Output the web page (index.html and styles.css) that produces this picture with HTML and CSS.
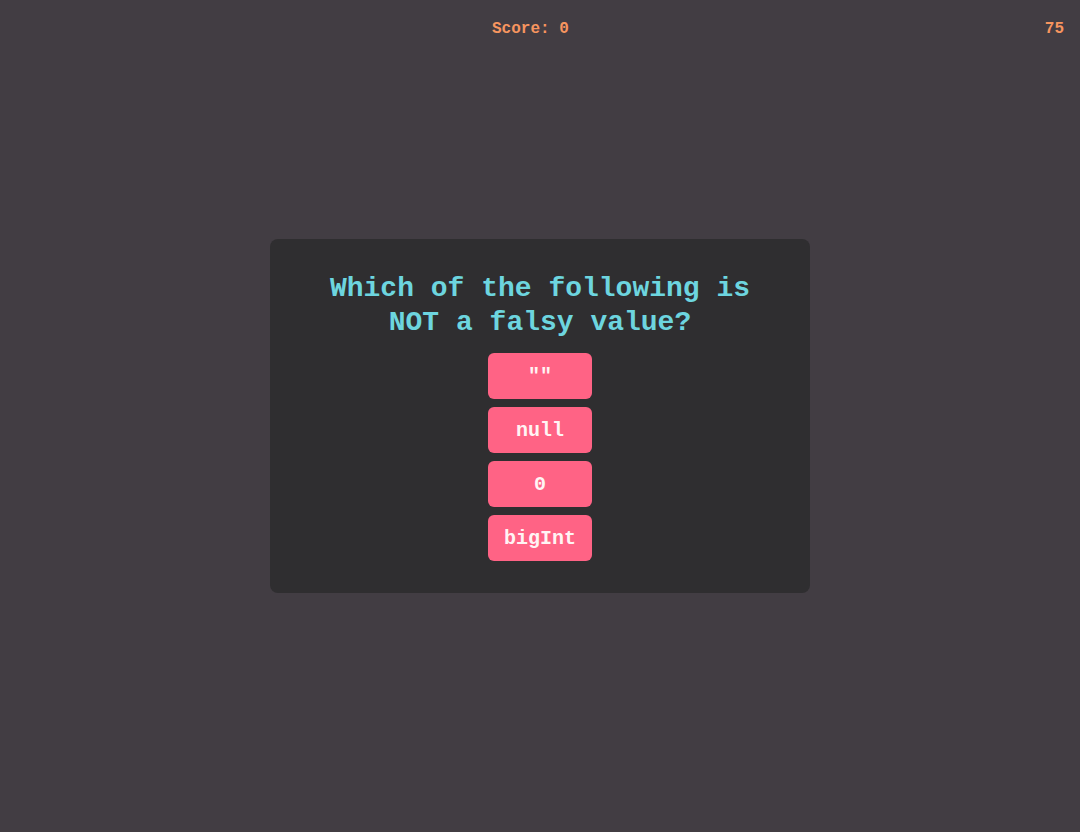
FILE: index.html
```html
<!DOCTYPE html>
<html lang="en">
<head>
<meta charset="utf-8">
<title>Quiz</title>
<link rel="stylesheet" href="styles.css">
</head>
<body>
<div class="page">
  <header class="top-bar">
    <span class="top-spacer"></span>
    <span class="score">Score: 0</span>
    <span class="timer">75</span>
  </header>
  <main class="stage">
    <section class="card">
      <h1 class="question">Which of the following is NOT a falsy value?</h1>
      <div class="answers">
        <button class="answer">""</button>
        <button class="answer">null</button>
        <button class="answer">0</button>
        <button class="answer">bigInt</button>
      </div>
    </section>
  </main>
  <div class="bottom-spacer"></div>
</div>
</body>
</html>
```
FILE: styles.css
```css
html, body {
  margin: 0;
  padding: 0;
}
body {
  background: #423d43;
  font-family: "Liberation Mono", "Courier New", monospace;
  font-weight: bold;
}
.page {
  height: 100vh;
  display: grid;
  grid-template-rows: 56px 1fr 56px;
}
.top-bar {
  display: flex;
  justify-content: space-between;
  align-items: flex-start;
  padding: 20px 16px 0;
  font-size: 16px;
  line-height: 18px;
  color: #f7955f;
}
.stage {
  display: flex;
  align-items: center;
  justify-content: center;
}
.card {
  width: 540px;
  box-sizing: border-box;
  padding: 33px 32px 32px;
  background: #2f2e30;
  border-radius: 8px;
  display: flex;
  flex-direction: column;
  align-items: center;
  gap: 13px;
}
.question {
  margin: 0;
  font-size: 28px;
  line-height: 34px;
  text-align: center;
  color: #6dd5df;
}
.answers {
  display: flex;
  flex-direction: column;
  gap: 8px;
  width: 104px;
}
.answer {
  height: 46px;
  border: none;
  border-radius: 6px;
  background: #ff6385;
  color: #fff4f4;
  font-family: inherit;
  font-weight: bold;
  font-size: 20px;
  padding: 0 16px;
  cursor: pointer;
}
```
